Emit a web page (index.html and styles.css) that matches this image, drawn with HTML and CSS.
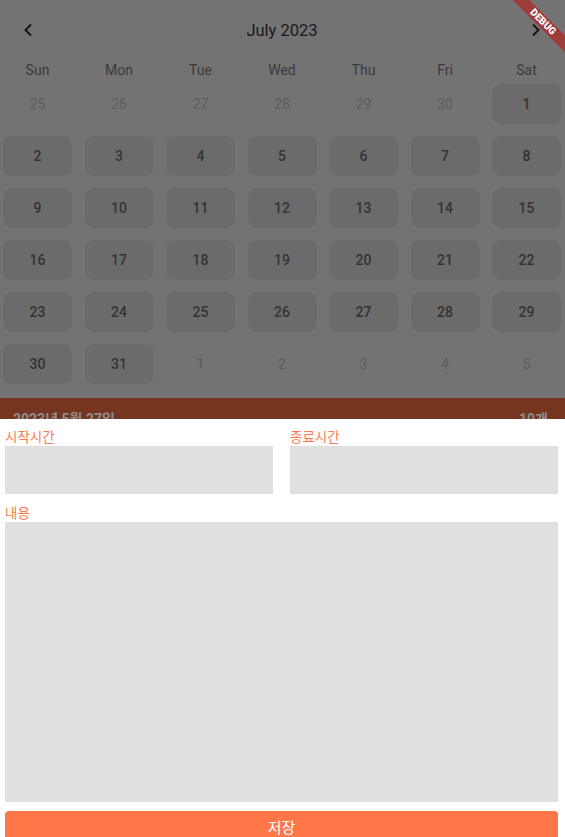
FILE: index.html
```html
<!DOCTYPE html>
<html lang="ko">
<head>
<meta charset="utf-8">
<title>Calendar</title>
<link rel="stylesheet" href="styles.css">
</head>
<body>
<div class="screen">
  <div class="calendar">
    <div class="cal-header">
      <span class="nav">
        <svg width="12" height="14" viewBox="0 0 12 14"><path d="M8 1.5 L2.5 7 L8 12.5" fill="none" stroke="#111" stroke-width="1.8"/></svg>
      </span>
      <span class="title">July 2023</span>
      <span class="nav">
        <svg width="12" height="14" viewBox="0 0 12 14"><path d="M4 1.5 L9.5 7 L4 12.5" fill="none" stroke="#111" stroke-width="1.8"/></svg>
      </span>
    </div>
    <div class="weekdays">
      <span>Sun</span><span>Mon</span><span>Tue</span><span>Wed</span><span>Thu</span><span>Fri</span><span>Sat</span>
    </div>
    <div class="days">
      <span class="day out">25</span><span class="day out">26</span><span class="day out">27</span><span class="day out">28</span><span class="day out">29</span><span class="day out">30</span><span class="day">1</span>
      <span class="day">2</span><span class="day">3</span><span class="day">4</span><span class="day">5</span><span class="day">6</span><span class="day">7</span><span class="day">8</span>
      <span class="day">9</span><span class="day">10</span><span class="day">11</span><span class="day">12</span><span class="day">13</span><span class="day">14</span><span class="day">15</span>
      <span class="day">16</span><span class="day">17</span><span class="day">18</span><span class="day">19</span><span class="day">20</span><span class="day">21</span><span class="day">22</span>
      <span class="day">23</span><span class="day">24</span><span class="day">25</span><span class="day">26</span><span class="day">27</span><span class="day">28</span><span class="day">29</span>
      <span class="day">30</span><span class="day">31</span><span class="day out">1</span><span class="day out">2</span><span class="day out">3</span><span class="day out">4</span><span class="day out">5</span>
    </div>
  </div>
  <div class="banner">
    <span>2023년 5월 27일</span>
    <span>10개</span>
  </div>

  <div class="sheet">
    <div class="time-row">
      <div class="field">
        <label class="label">시작시간</label>
        <div class="input"></div>
      </div>
      <div class="field">
        <label class="label">종료시간</label>
        <div class="input"></div>
      </div>
    </div>
    <div class="field content-field">
      <label class="label">내용</label>
      <div class="input textarea"></div>
    </div>
    <button class="save">저장</button>
  </div>

  <div class="debug"><span>DEBUG</span></div>
</div>
</body>
</html>
```

FILE: styles.css
```css
* { box-sizing: border-box; }
html, body {
  margin: 0;
  padding: 0;
  width: 565px;
  height: 837px;
  overflow: hidden;
  background: #737373;
  font-family: Roboto, "Noto Sans CJK KR", sans-serif;
}
.screen {
  position: relative;
  width: 565px;
  height: 837px;
  overflow: hidden;
  background: #737373;
}
.calendar {
  display: flex;
  flex-direction: column;
}
.cal-header {
  height: 60px;
  display: flex;
  align-items: center;
  justify-content: space-between;
  padding: 0 24px 0 23px;
}
.nav {
  display: flex;
  align-items: center;
  width: 12px;
  height: 14px;
}
.title {
  font-size: 16.5px;
  color: #1a1a1a;
  letter-spacing: 0;
}
.weekdays {
  height: 20px;
  display: grid;
  grid-template-columns: repeat(7, 69px);
  column-gap: 12.5px;
  padding-left: 3px;
  align-items: center;
  justify-items: center;
  font-size: 14px;
  color: #3a3a3a;
}
.days {
  margin-top: 4px;
  display: grid;
  grid-template-columns: repeat(7, 69px);
  grid-auto-rows: 40px;
  column-gap: 12.5px;
  row-gap: 12px;
  padding-left: 3px;
}
.day {
  display: flex;
  align-items: center;
  justify-content: center;
  background: #6b6b6b;
  border-radius: 9px;
  font-size: 14px;
  font-weight: 500;
  color: #333333;
}
.day.out {
  background: transparent;
  font-weight: 400;
  color: #5c5c5c;
}
.banner {
  margin-top: 14px;
  height: 40px;
  background: #75351f;
  display: flex;
  justify-content: space-between;
  padding: 10px 17px 0 13px;
  font-family: Roboto, "Noto Sans CJK KR", sans-serif;
  font-size: 14px;
  font-weight: 700;
  color: #8e8e8e;
}
.sheet {
  position: absolute;
  left: 0;
  top: 419px;
  width: 565px;
  height: 430px;
  background: #ffffff;
  padding: 8px 7px 0 5px;
  display: flex;
  flex-direction: column;
}
.time-row {
  display: grid;
  grid-template-columns: 1fr 1fr;
  column-gap: 17px;
}
.field {
  display: flex;
  flex-direction: column;
}
.label {
  height: 19px;
  line-height: 19px;
  font-family: "Noto Sans CJK KR", sans-serif;
  font-size: 13.5px;
  color: #ff7a50;
}
.input {
  height: 48px;
  background: #e0e0e0;
}
.content-field {
  margin-top: 9px;
}
.textarea {
  height: 280px;
}
.save {
  margin-top: 9px;
  height: 30px;
  border: none;
  border-radius: 4px;
  background: #ff7648;
  color: #ffffff;
  font-family: "Noto Sans CJK KR", sans-serif;
  font-size: 15px;
  padding: 0;
  width: 100%;
}
.debug {
  position: absolute;
  left: 493px;
  top: 15.5px;
  width: 100px;
  height: 12px;
  background: rgba(183, 28, 28, 0.63);
  transform: rotate(45deg);
  display: flex;
  align-items: center;
  justify-content: center;
}
.debug span {
  font-family: Roboto, sans-serif;
  font-size: 10px;
  font-weight: 900;
  color: #ffffff;
  line-height: 12px;
  letter-spacing: 0;
}
```
